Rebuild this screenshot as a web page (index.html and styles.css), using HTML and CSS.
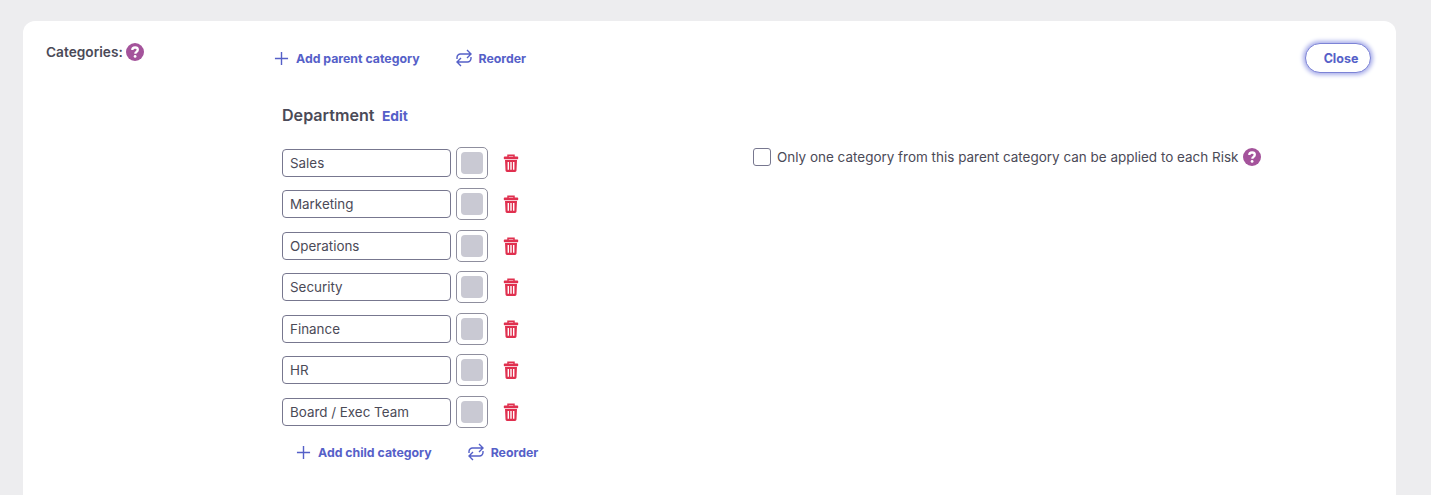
FILE: index.html
```html
<!DOCTYPE html>
<html lang="en">
<head>
<meta charset="utf-8">
<title>Categories</title>
<link rel="stylesheet" href="styles.css">
</head>
<body>
<main class="card">
  <div class="label-col">
    <span class="label">Categories:</span>
    <svg class="help" viewBox="0 0 18 18"><circle cx="9" cy="9" r="9" fill="#a4539b"/><path d="M6.300 7.100c0-1.600 1.200-2.600 2.800-2.600 1.600 0 2.700 1 2.700 2.300 0 1.100-.6 1.600-1.400 2.100-.7.400-1 .8-1 1.500v.3" fill="none" stroke="#fff" stroke-width="2.300"/><circle cx="9.100" cy="13.400" r="1.400" fill="#fff"/></svg>
  </div>
  <div class="content">
    <div class="toolbar">
      <a class="action">
        <svg class="plus" viewBox="0 0 16 16"><path d="M8 1v14M1 8h14" stroke="#5560c8" stroke-width="1.5" fill="none"/></svg>
        Add parent category
      </a>
      <a class="action">
        <svg class="swap" viewBox="0 0 16 18"><path d="M11 1l4 4-4 4M15 5H4.500A3.500 3.500 0 0 0 1 8.500V10M5 17l-4-4 4-4M1 13h10.500A3.500 3.500 0 0 0 15 9.500V8" stroke="#5560c8" stroke-width="1.400" fill="none"/></svg>
        Reorder
      </a>
      <button class="close">Close</button>
    </div>
    <div class="heading">
      <h2 class="title">Department</h2>
      <a class="edit">Edit</a>
    </div>
    <div class="columns">
      <div class="rows">
        <div class="row"><div class="field">Sales</div><div class="swatch"><span class="chip"></span></div><svg class="trash" viewBox="0 0 16 18"><use href="#bin"/></svg></div>
        <div class="row"><div class="field">Marketing</div><div class="swatch"><span class="chip"></span></div><svg class="trash" viewBox="0 0 16 18"><use href="#bin"/></svg></div>
        <div class="row"><div class="field">Operations</div><div class="swatch"><span class="chip"></span></div><svg class="trash" viewBox="0 0 16 18"><use href="#bin"/></svg></div>
        <div class="row"><div class="field">Security</div><div class="swatch"><span class="chip"></span></div><svg class="trash" viewBox="0 0 16 18"><use href="#bin"/></svg></div>
        <div class="row"><div class="field">Finance</div><div class="swatch"><span class="chip"></span></div><svg class="trash" viewBox="0 0 16 18"><use href="#bin"/></svg></div>
        <div class="row"><div class="field">HR</div><div class="swatch"><span class="chip"></span></div><svg class="trash" viewBox="0 0 16 18"><use href="#bin"/></svg></div>
        <div class="row"><div class="field">Board / Exec Team</div><div class="swatch"><span class="chip"></span></div><svg class="trash" viewBox="0 0 16 18"><use href="#bin"/></svg></div>
        <div class="child-actions">
          <a class="action">
            <svg class="plus" viewBox="0 0 16 16"><path d="M8 1v14M1 8h14" stroke="#5560c8" stroke-width="1.5" fill="none"/></svg>
            Add child category
          </a>
          <a class="action">
            <svg class="swap" viewBox="0 0 16 18"><path d="M11 1l4 4-4 4M15 5H4.500A3.500 3.500 0 0 0 1 8.500V10M5 17l-4-4 4-4M1 13h10.500A3.500 3.500 0 0 0 15 9.500V8" stroke="#5560c8" stroke-width="1.400" fill="none"/></svg>
            Reorder
          </a>
        </div>
      </div>
      <div class="option">
        <span class="checkbox"></span>
        <span class="option-text">Only one category from this parent category can be applied to each Risk</span>
        <svg class="help" viewBox="0 0 18 18"><circle cx="9" cy="9" r="9" fill="#a4539b"/><path d="M6.300 7.100c0-1.600 1.200-2.600 2.800-2.600 1.600 0 2.700 1 2.700 2.300 0 1.100-.6 1.600-1.400 2.100-.7.400-1 .8-1 1.500v.3" fill="none" stroke="#fff" stroke-width="2.300"/><circle cx="9.100" cy="13.400" r="1.400" fill="#fff"/></svg>
      </div>
    </div>
  </div>
</main>
<svg class="defs" aria-hidden="true"><defs><symbol id="bin" viewBox="0 0 16 18"><path d="M5 3V1.300h6V3" fill="none" stroke="#e0304f" stroke-width="1.500"/><rect x="0.800" y="2.600" width="14.400" height="2.600" rx="0.800" fill="#e0304f"/><path d="M2 6h12l-.5 10.500a1.500 1.500 0 0 1-1.500 1.400H4a1.500 1.500 0 0 1-1.500-1.400z" fill="#e0304f"/><path d="M5.300 8v7.800M8 8v7.800M10.700 8v7.800" stroke="#fff" stroke-width="1.400"/></symbol></defs></svg>
</body>
</html>
```
FILE: styles.css
```css
* { box-sizing: border-box; }
html, body { height: 100%; }
body {
  margin: 0;
  height: 495px;
  overflow: hidden;
  background: #edEDEF;
  font-family: Inter, "Liberation Sans", sans-serif;
  color: #4b4a57;
  padding: 21px 35px 0 23px;
}
.card {
  display: flex;
  height: 474px;
  background: #fff;
  border-radius: 12px 12px 0 0;
  padding: 21px 25px 0 23px;
}
.label-col {
  flex: 0 0 236px;
  display: flex;
  align-items: flex-start;
  gap: 3px;
  padding-top: 1px;
}
.label { font-size: 13.700px; font-weight: 600; line-height: 18px; }
.help { width: 18px; height: 18px; flex: none; }
.content { flex: 1; min-width: 0; }
.toolbar {
  display: flex;
  align-items: center;
  height: 32px;
  margin-left: -8.5px;
  gap: 36px;
}
.action {
  display: inline-flex;
  align-items: center;
  color: #5560c8;
  font-size: 12.300px;
  font-weight: 700;
}
.plus { width: 15px; height: 15px; margin-right: 7.500px; }
.swap { width: 16px; height: 18px; margin-right: 7px; }
.close {
  margin-left: auto;
  width: 66px;
  height: 30px;
  border: 1px solid #7c83d6;
  border-radius: 15px;
  background: #fff;
  color: #5560c8;
  font: 700 12.500px Inter, "Liberation Sans", sans-serif;
  padding: 0 0 0 6px;
  box-shadow: 0 0 4px 2px #a9aeea;
}
.heading {
  display: flex;
  align-items: baseline;
  gap: 7.500px;
  margin-top: 31px;
  height: 20px;
}
.title { margin: 0; font-size: 16.100px; font-weight: 600; line-height: 20px; }
.edit { color: #5560c8; font-size: 13.800px; font-weight: 700; }
.columns { display: flex; margin-top: 22px; }
.rows { flex: 0 0 471px; display: flex; flex-direction: column; gap: 9.450px; }
.row { display: flex; align-items: center; height: 32px; }
.field {
  width: 169px;
  height: 28px;
  border: 1px solid #77778f;
  border-radius: 4px;
  padding-left: 7px;
  font-size: 13.400px;
  line-height: 26px;
}
.swatch {
  width: 32px;
  height: 32px;
  margin-left: 5px;
  border: 1px solid #8f8f9e;
  border-radius: 5px;
  display: flex;
  align-items: center;
  justify-content: center;
}
.chip { width: 22px; height: 22px; border-radius: 4px; background: #c9c9d3; }
.trash { width: 16px; height: 18px; margin-left: 15px; }
.child-actions {
  display: flex;
  align-items: center;
  gap: 36px;
  margin: 4.300px 0 0 13.500px;
  height: 22px;
}
.option {
  display: flex;
  align-items: center;
  gap: 4.500px;
  height: 20px;
  align-self: flex-start;
}
.checkbox {
  width: 18px;
  height: 18px;
  border: 1px solid #77778f;
  border-radius: 3px;
  margin-right: 1.500px;
}
.option-text { font-size: 13.480px; }
.defs { display: none; }
```
